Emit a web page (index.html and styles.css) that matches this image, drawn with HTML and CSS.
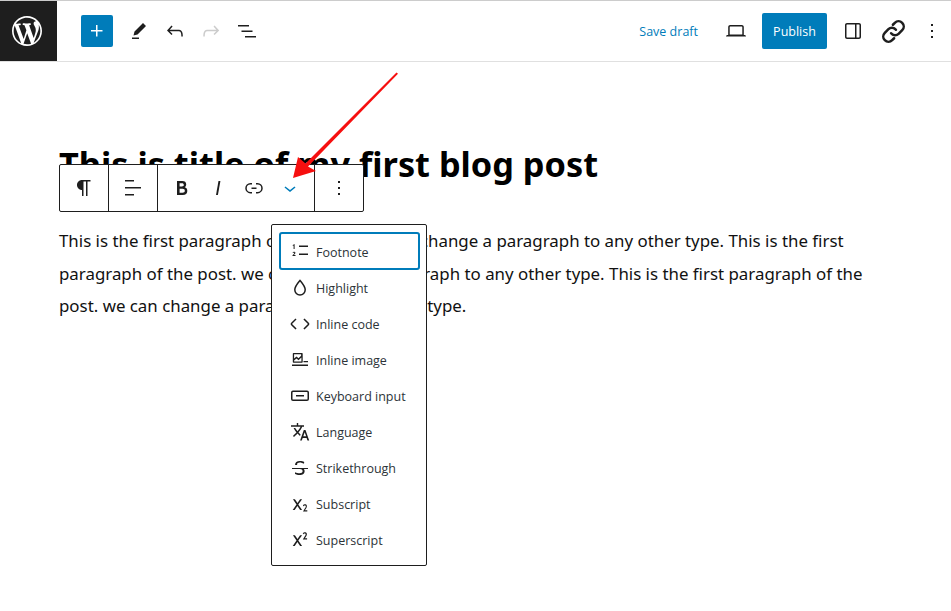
FILE: index.html
```html
<!DOCTYPE html>
<html lang="en">
<head>
  <meta charset="UTF-8">
  <meta name="viewport" content="width=device-width, initial-scale=1.0">
  <title>Edit Post</title>
  <link rel="stylesheet" href="styles.css">
</head>
<body>

  <header class="editor-header">
    <a class="site-logo" href="#">
      <svg viewBox="0 0 20 20" width="30" height="30"><path fill="#fff" d="M20 10c0-5.51-4.49-10-10-10C4.48 0 0 4.49 0 10c0 5.52 4.48 10 10 10 5.51 0 10-4.48 10-10zM7.78 15.37L4.37 6.22c.55-.02 1.17-.08 1.17-.08.5-.06.44-1.13-.06-1.11 0 0-1.45.11-2.37.11-.18 0-.37 0-.58-.01C4.12 2.69 6.87 1.11 10 1.11c2.33 0 4.45.87 6.05 2.34-.68-.11-1.65.39-1.65 1.58 0 .74.45 1.36.9 2.1.35.61.55 1.36.55 2.46 0 1.49-1.4 5-1.4 5l-3.03-8.37c.54-.02.82-.17.82-.17.5-.05.44-1.25-.06-1.22 0 0-1.44.12-2.38.12-.87 0-2.33-.12-2.33-.12-.5-.03-.56 1.2-.06 1.22l.92.08 1.26 3.41zM17.41 10c.24-.64.74-1.87.43-4.25.7 1.29 1.05 2.71 1.05 4.25 0 3.29-1.73 6.24-4.4 7.78.97-2.59 1.94-5.2 2.92-7.78zM6.1 18.09C3.12 16.65 1.11 13.53 1.11 10c0-1.3.23-2.48.72-3.59C3.25 10.3 4.67 14.2 6.1 18.09zm4.03-6.63l2.58 6.98c-.86.29-1.76.45-2.71.45-.79 0-1.57-.11-2.29-.33.81-2.38 1.62-4.74 2.42-7.1z"/></svg>
    </a>

    <div class="header-tools">
      <button class="inserter"><svg viewBox="0 0 24 24" width="24" height="24"><path fill="#fff" d="M11 12.5V17.5H12.5V12.5H17.5V11H12.5V6H11V11H6V12.5H11Z"/></svg></button>
      <button class="tool"><svg viewBox="0 0 24 24" width="24" height="24"><path d="m19 7-3-3-8.5 8.5-1 4 4-1L19 7Zm-7 11.5H5V20h7v-1.5Z"/></svg></button>
      <button class="tool"><svg viewBox="0 0 24 24" width="24" height="24"><path d="M18.3 11.7c-.6-.6-1.4-.9-2.3-.9H6.7l2.9-3.3-1.1-1-4.5 5L8.5 16l1-1-2.7-2.7H16c.5 0 .9.2 1.3.5 1 1 1 3.4 1 4.5v.3h1.5v-.2c0-1.5 0-4.3-1.5-5.7z"/></svg></button>
      <button class="tool disabled"><svg viewBox="0 0 24 24" width="24" height="24"><path d="M15.6 6.5l-1.1 1 2.9 3.3H8c-.9 0-1.7.3-2.3.9-1.4 1.5-1.4 4.2-1.4 5.6v.2h1.5v-.3c0-1.1 0-3.5 1-4.5.3-.3.7-.5 1.3-.5h9.2L14.5 15l1.1 1.1 4.6-4.6-4.6-5z"/></svg></button>
      <button class="tool"><svg viewBox="0 0 24 24" width="24" height="24"><path d="M3 6h11v1.5H3V6Zm3.5 5.5h11V13h-11v-1.5ZM21 17H10v1.5h11V17Z"/></svg></button>
    </div>

    <div class="header-settings">
      <a class="save-draft" href="#">Save draft</a>
      <button class="tool preview"><svg viewBox="0 0 24 24" width="24" height="24"><path d="M20.5 16h-.7V8c0-1.1-.9-2-2-2H6.2c-1.1 0-2 .9-2 2v8h-.7c-.8 0-1.5.7-1.5 1.500h20c0-.8-.7-1.500-1.500-1.500zM5.700 8c0-.3.2-.5.5-.5h11.600c.3 0 .5.2.5.5v7.600H5.700V8z"/></svg></button>
      <button class="publish">Publish</button>
      <button class="tool sidebar"><svg viewBox="0 0 24 24" width="24" height="24"><path d="M18 4H6c-1.100 0-2 .9-2 2v12c0 1.100.9 2 2 2h12c1.100 0 2-.9 2-2V6c0-1.100-.9-2-2-2zm-4 14.500H6c-.3 0-.5-.2-.5-.5V6c0-.3.2-.5.5-.5h8v13zm4.500-.5c0 .3-.2.5-.5.5h-2.500v-13H18c.3 0 .5.2.5.5v12z"/></svg></button>
      <button class="tool chain"><svg viewBox="0 0 24 24" width="29" height="29"><g fill="none" stroke="#1e1e1e" stroke-width="2.100" stroke-linecap="round"><path d="M10 13.500a4.200 4.200 0 0 0 6.200.4l3-3a4.300 4.300 0 0 0-6.100-6.100l-1.600 1.600"/><path d="M14 10.500a4.200 4.200 0 0 0-6.200-.4l-3 3a4.300 4.300 0 0 0 6.100 6.100l1.600-1.600"/></g></svg></button>
      <button class="tool more"><svg viewBox="0 0 24 24" width="24" height="24"><path d="M13 19h-2v-2h2v2zm0-6h-2v-2h2v2zm0-6h-2V5h2v2z"/></svg></button>
    </div>
  </header>

  <main class="editor-canvas">
    <h1 class="post-title">This is title of my first blog post</h1>
    <p class="post-text">This is the first paragraph of the post. we can change a paragraph to any other type. This is the first paragraph of the post. we can change a paragraph to any other type. This is the first paragraph of the post. we can change a paragraph to any other type.</p>

    <!-- Block toolbar -->
    <div class="block-toolbar">
      <div class="toolbar-group single">
        <svg viewBox="0 0 24 24" width="24" height="24"><path d="m9.99609 14v-.2251l.00391.0001v6.225h1.5v-14.5h2.5v14.5h1.5v-14.5h3v-1.5h-8.50391c-2.76142 0-5 2.23858-5 5 0 2.7614 2.23858 5 5 5z"/></svg>
      </div>
      <div class="toolbar-group single">
        <svg viewBox="0 0 24 24" width="24" height="24"><path d="M13 5.5H4V4h9v1.5Zm7 7H4V11h16v1.5Zm-7 7H4V18h9v1.5Z"/></svg>
      </div>
      <div class="toolbar-group format">
        <svg viewBox="0 0 24 24" width="24" height="24"><path d="M14.7 11.3c1-.6 1.5-1.6 1.5-3 0-2.3-1.3-3.4-4-3.4H7v14h5.8c1.4 0 2.5-.3 3.3-1 .8-.7 1.2-1.7 1.2-2.9.1-1.9-.8-3.1-2.6-3.7zm-5.1-4h2.3c.6 0 1.1.1 1.4.4.3.3.5.7.5 1.2s-.2 1-.5 1.2c-.3.3-.8.4-1.4.4H9.6V7.3zm4.6 9c-.4.3-1 .4-1.7.4H9.6v-3.9h2.9c.7 0 1.3.2 1.7.5.4.3.6.8.6 1.5s-.2 1.2-.6 1.5z"/></svg>
        <svg viewBox="0 0 24 24" width="24" height="24"><path d="M12.5 5L10 19h1.9l2.5-14z"/></svg>
        <svg viewBox="0 0 24 24" width="24" height="24"><path d="M10 17.389H8.444A5.194 5.194 0 1 1 8.444 7H10v1.5H8.444a3.694 3.694 0 0 0 0 7.389H10v1.5ZM14 7h1.556a5.194 5.194 0 0 1 0 10.39H14v-1.5h1.556a3.694 3.694 0 0 0 0-7.39H14V7Zm-4.5 6h5v-1.5h-5V13Z"/></svg>
        <svg class="active" viewBox="0 0 24 24" width="24" height="24"><path d="M17.5 11.6L12 16l-5.5-4.4.9-1.2L12 14l4.5-3.6 1 1.2z"/></svg>
      </div>
      <div class="toolbar-group last">
        <svg viewBox="0 0 24 24" width="24" height="24"><path d="M13 19h-2v-2h2v2zm0-6h-2v-2h2v2zm0-6h-2V5h2v2z"/></svg>
      </div>
    </div>

    <!-- Format dropdown -->
    <div class="format-menu">
      <div class="menu-item focused">
        <svg viewBox="0 0 24 24" width="24" height="24"><path d="M11 5.500h9V7h-9zM11 13.500h9V15h-9z"/><path d="M4.800 5 6.600 4v5H5.600V5.600l-.8.4zM4.500 12.400c.5-1 2.900-1 2.900.4 0 .9-1 1.600-1.500 2.200h1.600v1H4.500v-.8c.6-.7 1.800-1.500 1.800-2.300 0-.6-.8-.5-1.100.1z"/></svg>
        <span>Footnote</span>
      </div>
      <div class="menu-item">
        <svg viewBox="0 0 24 24" width="24" height="24"><path d="M12 4.500c-2.500 3-5.200 6-5.200 9.300a5.200 5.200 0 0 0 10.400 0c0-3.300-2.700-6.300-5.200-9.300z" fill="none" stroke="#1e1e1e" stroke-width="1.500"/></svg>
        <span>Highlight</span>
      </div>
      <div class="menu-item">
        <svg viewBox="0 0 24 24" width="24" height="24"><path d="M20.800 10.700l-4.300-4.300-1.100 1.100 4.300 4.300c.1.100.1.300 0 .4l-4.300 4.300 1.100 1.100 4.300-4.300c.7-.8.7-1.900 0-2.600zM4.200 11.800l4.300-4.300-1-1-4.300 4.300c-.7.7-.7 1.800 0 2.500l4.300 4.300 1.100-1.100-4.300-4.300c-.2-.1-.2-.3-.1-.4z"/></svg>
        <span>Inline code</span>
      </div>
      <div class="menu-item">
        <svg viewBox="0 0 24 24" width="24" height="24"><path d="M4 16.500h16V18H4zM15.500 13H20v1.300h-4.500z"/><path fill-rule="evenodd" d="M5.500 5h8.500a.7.7 0 0 1 .7.7V14a.7.7 0 0 1-.7.7H5.500a.7.7 0 0 1-.7-.7V5.700a.7.7 0 0 1 .7-.7zm.6 1.200v4.200l2.400-1.800 2 1.600 2.600-2.400V6.200zm0 7.300h7.300v-3.900l-2.900 2.600-2-1.600-2.400 1.800z"/></svg>
        <span>Inline image</span>
      </div>
      <div class="menu-item">
        <svg viewBox="0 0 24 24" width="24" height="24"><path d="M8 12.500h8V11H8v1.500Z M19 6.500H5a2 2 0 0 0-2 2V15a2 2 0 0 0 2 2h14a2 2 0 0 0 2-2V8.500a2 2 0 0 0-2-2ZM5 8h14a.5.5 0 0 1 .5.5V15a.5.5 0 0 1-.5.5H5a.5.5 0 0 1-.5-.5V8.500A.5.5 0 0 1 5 8Z"/></svg>
        <span>Keyboard input</span>
      </div>
      <div class="menu-item">
        <svg viewBox="0 0 24 24" width="24" height="24"><path d="M17.500 10h-1.700l-3.700 10.500h1.700l.9-2.600h3.900l.9 2.600h1.700L17.500 10zm-2.200 6.300 1.400-4 1.400 4h-2.800zm-4.800-3.800c1.600-1.800 2.900-3.600 3.700-5.700H16V5.200h-5.800V3H8.800v2.200H3v1.500h9.600c-.7 1.600-1.800 3.100-3.100 4.600C8.600 10.200 7.800 9 7.200 8H5.600c.6 1.400 1.700 2.900 2.900 4.400l-2.400 2.400c-.3.4-.7.8-1.100 1.200l1 1 1.200-1.200c.8-.8 1.600-1.500 2.300-2.300.8.900 1.700 1.700 2.500 2.500l.6-1.500c-.7-.6-1.400-1.300-2.100-2z"/></svg>
        <span>Language</span>
      </div>
      <div class="menu-item">
        <svg viewBox="0 0 24 24" width="24" height="24"><path d="M9.100 9v-.5c0-.6.2-1.100.7-1.400.5-.3 1.200-.5 2-.5.7 0 1.400.1 2.100.3.7.2 1.400.5 2.100.9l.2-1.900c-.6-.3-1.200-.5-1.900-.7-.8-.1-1.600-.2-2.400-.2-1.500 0-2.700.3-3.600 1-.8.7-1.200 1.500-1.200 2.600V9h2zM20 12H4v1h8.300c.3.1.6.2.8.3.5.2.9.5 1.100.8.3.3.4.7.4 1.200 0 .7-.2 1.100-.8 1.500-.5.3-1.200.5-2.100.5-.8 0-1.600-.1-2.400-.3-.8-.2-1.500-.5-2.200-.8L7 18.100c.5.2 1.200.4 2 .6.8.2 1.600.3 2.400.3 1.700 0 3-.3 3.900-1 .9-.7 1.300-1.600 1.300-2.800 0-.9-.2-1.700-.7-2.200H20v-1z"/></svg>
        <span>Strikethrough</span>
      </div>
      <div class="menu-item">
        <svg viewBox="0 0 24 24" width="24" height="24"><path d="M16.900 18.300l.8-1.200c.4-.6.7-1.200.9-1.600.2-.4.3-.8.3-1.200 0-.3-.1-.7-.2-1-.1-.3-.4-.5-.6-.7-.3-.2-.6-.3-1-.3s-.8.1-1.100.2c-.3.1-.7.3-1 .6l.2 1.300c.3-.3.5-.5.8-.6s.6-.2.9-.2c.3 0 .5.1.7.2.2.2.2.4.2.7 0 .3-.1.5-.2.8-.1.3-.4.7-.8 1.300L15 19.400h4.300v-1.200h-2.400zM14.100 7.200h-2L9.500 11 6.900 7.200h-2l3.600 5.300L4.700 18h2l2.700-4 2.700 4h2l-3.800-5.500 3.800-5.300z"/></svg>
        <span>Subscript</span>
      </div>
      <div class="menu-item">
        <svg viewBox="0 0 24 24" width="24" height="24"><path d="M16.900 10.300l.8-1.300c.4-.6.7-1.200.9-1.600.2-.4.3-.8.3-1.200 0-.3-.1-.7-.2-1-.2-.2-.4-.4-.7-.6-.3-.2-.6-.3-1-.3s-.8.1-1.100.2c-.3.1-.7.3-1 .6l.1 1.300c.3-.3.5-.5.8-.6s.6-.2.9-.2c.3 0 .5.1.7.2.2.2.2.4.2.7 0 .3-.1.5-.2.8-.1.3-.4.7-.8 1.300l-1.800 2.800h4.300v-1.200h-2.200zm-2.800-3.100h-2L9.500 11 6.900 7.200h-2l3.600 5.300L4.700 18h2l2.700-4 2.700 4h2l-3.800-5.500 3.800-5.300z"/></svg>
        <span>Superscript</span>
      </div>
    </div>

    <!-- Red annotation arrow -->
    <svg class="annotation" viewBox="0 0 125 110" width="125" height="110"><path fill="#f60f0f" d="M119.500 1.500 121 2.800 31 95.500 39 100 16 107 21 86 28.500 92.500z"/></svg>
  </main>

</body>
</html>
```

FILE: styles.css
```css
/* styles.css */
body {
  margin: 0;
  background-color: #fff;
  color: #1e1e1e;
  font-family: "Open Sans", sans-serif;
}

button {
  border: none;
  background: none;
  padding: 0;
  font-family: inherit;
  cursor: pointer;
}

svg {
  display: block;
  fill: #1e1e1e;
}

/* Header */
.editor-header {
  display: flex;
  align-items: center;
  height: 60px;
  border-top: 1px solid #ccc;
  border-bottom: 1px solid #e0e0e0;
}

.site-logo {
  display: flex;
  align-items: center;
  justify-content: center;
  box-sizing: border-box;
  width: 57px;
  height: 60px;
  padding-right: 3px;
  background-color: #1e1e1e;
}

.header-tools {
  display: flex;
  align-items: center;
  margin-left: 24px;
}

.inserter {
  display: flex;
  align-items: center;
  justify-content: center;
  width: 32px;
  height: 32px;
  margin-right: 8px;
  background-color: #007cba;
  border-radius: 2px;
}

.tool {
  display: flex;
  align-items: center;
  justify-content: center;
  width: 36px;
  height: 36px;
}

.tool.disabled svg {
  fill: #ccc;
}

.header-settings {
  display: flex;
  align-items: center;
  margin-left: auto;
  padding-right: 1px;
}

.save-draft {
  color: #007cba;
  font-size: 12.5px;
  text-decoration: none;
  margin-right: 20px;
}

.publish {
  width: 65px;
  height: 36px;
  margin: 0 8px;
  background-color: #007cba;
  color: #fff;
  font-size: 12.5px;
  border-radius: 2px;
}

.chain {
  margin: 0 3px 0 4px;
}

/* Post content */
.editor-canvas {
  position: relative;
  box-sizing: border-box;
  min-height: 549px;
  padding: 82px 59px 0;
}

.post-title {
  margin: 0 0 41px;
  font-family: "Noto Sans", sans-serif;
  font-size: 34.3px;
  line-height: 40px;
  font-weight: 700;
  color: #000;
}

.post-text {
  margin: 0;
  font-family: "Noto Sans", sans-serif;
  font-size: 16.88px;
  line-height: 32.5px;
  color: #111;
}

/* Block toolbar */
.block-toolbar {
  position: absolute;
  left: 59px;
  top: 102px;
  display: flex;
  height: 46px;
  background-color: #fff;
  border: 1px solid #1e1e1e;
  border-radius: 2px;
}

.toolbar-group {
  display: flex;
  align-items: center;
  justify-content: center;
  border-right: 1px solid #1e1e1e;
}

.toolbar-group.single {
  width: 48px;
}

.toolbar-group.format {
  width: 156px;
  gap: 12px;
}

.toolbar-group.last {
  width: 48px;
  border-right: none;
}

.block-toolbar .active {
  fill: #007cba;
}

/* Format dropdown */
.format-menu {
  position: absolute;
  left: 271px;
  top: 162px;
  width: 141px;
  padding: 9px 6px 7px 7px;
  background-color: #fff;
  border: 1px solid #1e1e1e;
  border-radius: 2px;
}

.menu-item {
  display: flex;
  align-items: center;
  gap: 4px;
  height: 36px;
  padding-left: 9px;
  font-size: 12.5px;
  color: #2c3338;
}

.menu-item.focused {
  position: relative;
}

.menu-item.focused::after {
  content: "";
  position: absolute;
  inset: -2px 0 0 0;
  border: 2px solid #007cba;
  border-radius: 3px;
}

.annotation {
  position: absolute;
  left: 277px;
  top: 9px;
}
```
